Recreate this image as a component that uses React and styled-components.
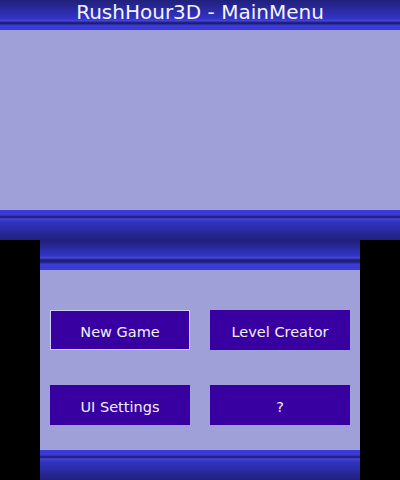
import React from "react";
import styled, { createGlobalStyle } from "styled-components";

const Global = createGlobalStyle`
  html, body {
    margin: 0;
    padding: 0;
    background: #000;
  }
`;

const Screen = styled.div`
  width: 400px;
  height: 480px;
  display: flex;
  flex-direction: column;
  font-family: "DejaVu Sans", "Liberation Sans", sans-serif;
  background: #000;
`;

const TopScreen = styled.div`
  height: 240px;
  display: flex;
  flex-direction: column;
`;

const BottomRow = styled.div`
  height: 240px;
  display: flex;
  justify-content: center;
`;

const BottomScreen = styled.div`
  width: 320px;
  display: flex;
  flex-direction: column;
`;

const Header = styled.div`
  height: 30px;
  display: flex;
  justify-content: center;
  align-items: flex-start;
  color: #f4f4ff;
  font-size: 20px;
  line-height: 25px;
  background: linear-gradient(
    to bottom,
    #20207a 0px,
    #3434c8 19px,
    #4646dc 21px,
    #24248a 22px,
    #1c1c6c 24px,
    #3a3ad8 25px,
    #3a3ad8 30px
  );
`;

/* $flip = bar at top of the lower screen (dark side up) */
const Bar = styled.div`
  height: 30px;
  flex-shrink: 0;
  background: ${(p) =>
    p.$flip
      ? `linear-gradient(
    to bottom,
    #20207a 0px,
    #3434c8 16px,
    #4848e0 18px,
    #2a2a94 19px,
    #1c1c6c 21px,
    #2a2a94 23px,
    #3a3ad8 24px,
    #3a3ad8 30px
  )`
      : `linear-gradient(
    to bottom,
    #3a3ad8 0px,
    #3a3ad8 5px,
    #2a2a94 6px,
    #1c1c6c 7px,
    #2a2a94 8px,
    #4848e0 9px,
    #3434c8 11px,
    #20207a 30px
  )`};
`;

const Content = styled.div`
  flex: 1;
  background: #a0a0d8;
`;

const Menu = styled.div`
  flex: 1;
  background: #a0a0d8;
  display: grid;
  grid-template-columns: 140px 140px;
  grid-auto-rows: 40px;
  column-gap: 20px;
  row-gap: 35px;
  padding: 40px 10px 0;
  align-content: start;
`;

const Button = styled.div`
  box-sizing: border-box;
  background: #3800a0;
  border: 1px solid ${(p) => (p.$selected ? "#d0d0f4" : "#3800a0")};
  color: #f0f0ff;
  font-size: 14.5px;
  padding-top: 3px;
  display: flex;
  align-items: center;
  justify-content: center;
`;

export default function App() {
  return (
    <Screen>
      <Global />
      <TopScreen>
        <Header>RushHour3D - MainMenu</Header>
        <Content />
        <Bar />
      </TopScreen>
      <BottomRow>
        <BottomScreen>
          <Bar $flip />
          <Menu>
            <Button $selected>New Game</Button>
            <Button>Level Creator</Button>
            <Button>UI Settings</Button>
            <Button>?</Button>
          </Menu>
          <Bar />
        </BottomScreen>
      </BottomRow>
    </Screen>
  );
}
